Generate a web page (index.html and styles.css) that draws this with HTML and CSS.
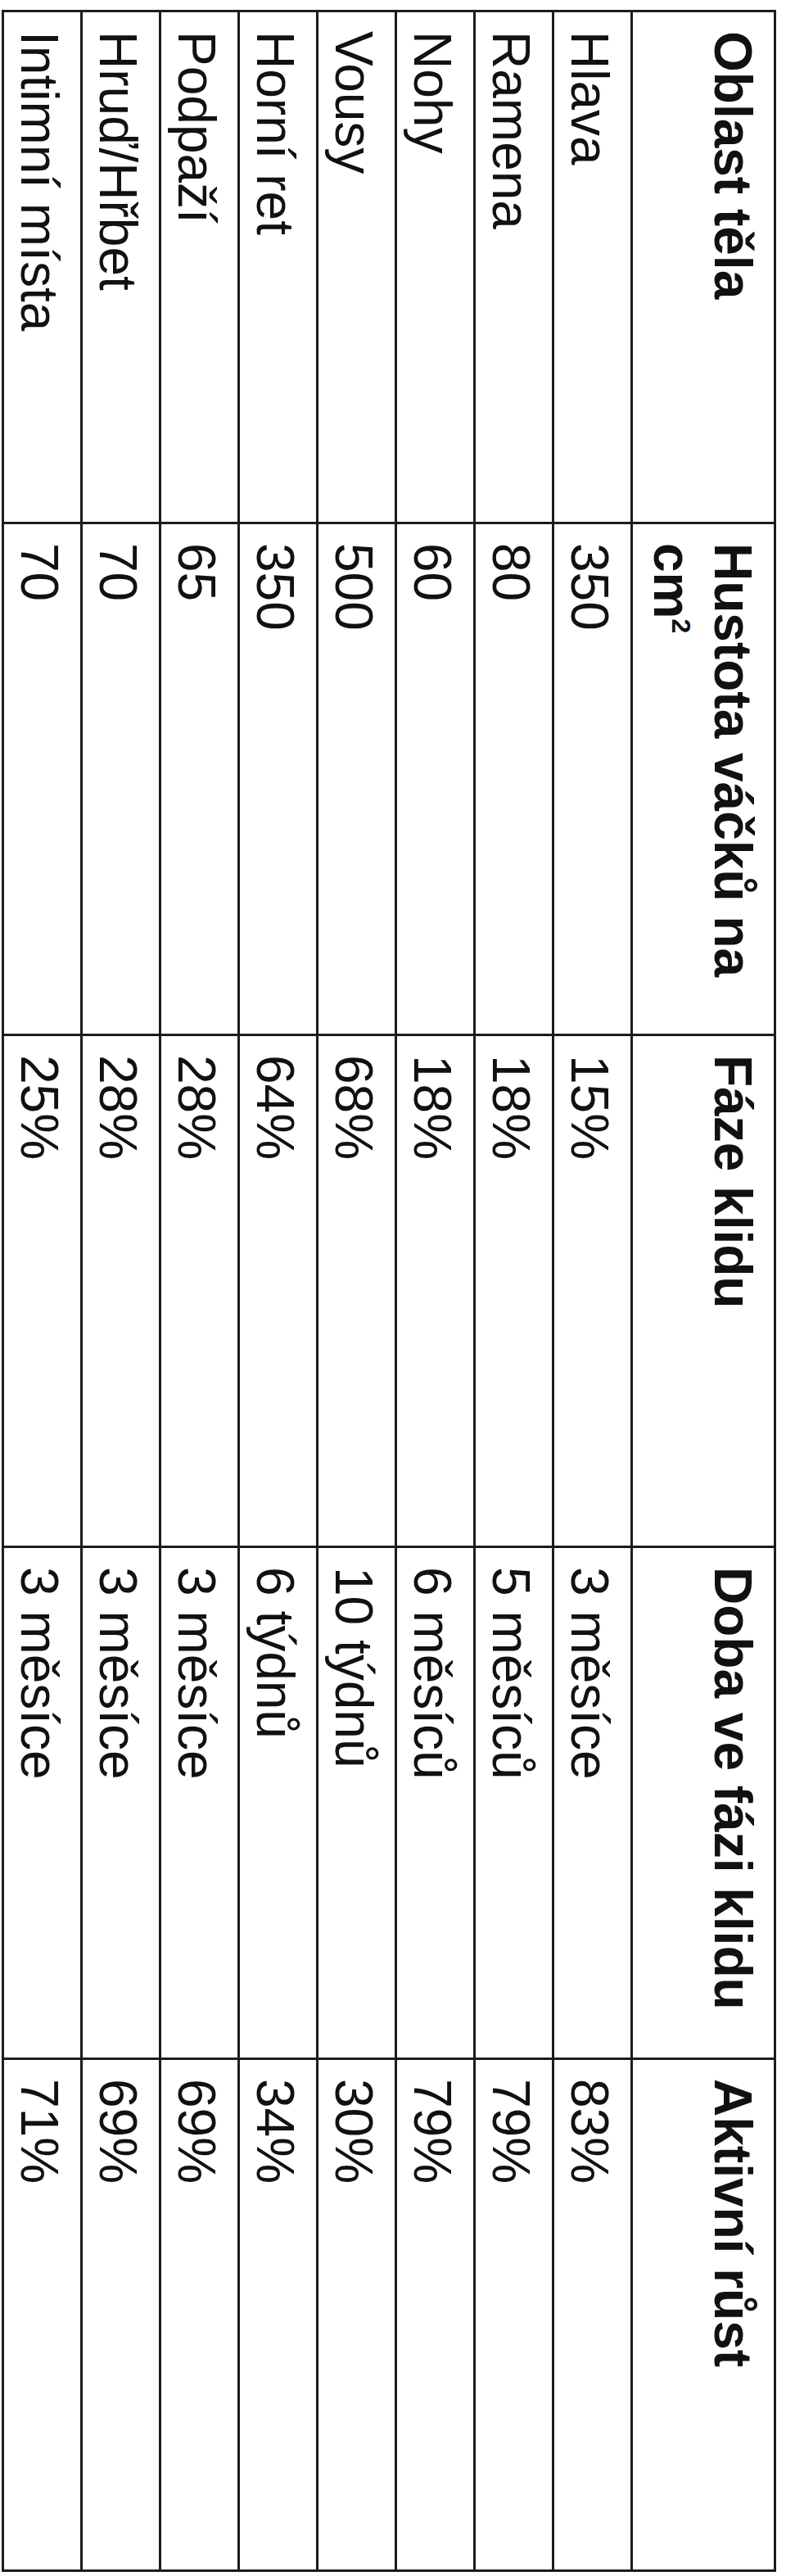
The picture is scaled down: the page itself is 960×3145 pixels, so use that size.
FILE: index.html
```html
<!DOCTYPE html>
<html lang="cs">
<head>
<meta charset="utf-8">
<title>Oblast těla</title>
<link rel="stylesheet" href="styles.css">
</head>
<body>
<div class="page">
  <table class="hair-table">
    <thead>
      <tr class="head-row">
        <th>Oblast těla</th>
        <th>Hustota váčků na cm<sup>2</sup></th>
        <th>Fáze klidu</th>
        <th>Doba ve fázi klidu</th>
        <th>Aktivní růst</th>
      </tr>
    </thead>
    <tbody>
      <tr><td>Hlava</td><td>350</td><td>15%</td><td>3 měsíce</td><td>83%</td></tr>
      <tr><td>Ramena</td><td>80</td><td>18%</td><td>5 měsíců</td><td>79%</td></tr>
      <tr><td>Nohy</td><td>60</td><td>18%</td><td>6 měsíců</td><td>79%</td></tr>
      <tr><td>Vousy</td><td>500</td><td>68%</td><td>10 týdnů</td><td>30%</td></tr>
      <tr><td>Horní ret</td><td>350</td><td>64%</td><td>6 týdnů</td><td>34%</td></tr>
      <tr><td>Podpaží</td><td>65</td><td>28%</td><td>3 měsíce</td><td>69%</td></tr>
      <tr><td>Hruď/Hřbet</td><td>70</td><td>28%</td><td>3 měsíce</td><td>69%</td></tr>
      <tr><td>Intimní místa</td><td>70</td><td>25%</td><td>3 měsíce</td><td>71%</td></tr>
    </tbody>
  </table>
</div>
</body>
</html>
```

FILE: styles.css
```css
html, body {
  margin: 0;
  padding: 0;
  background: #ffffff;
  overflow: hidden;
}

.page {
  padding: 12px 0 0 2px;
}

.hair-table {
  writing-mode: vertical-rl;
  text-orientation: sideways;
  border-collapse: separate;
  border-spacing: 3px;
  background: #1c1c1c;
  table-layout: fixed;
  inline-size: 3128px;
  block-size: 946px;
  font-family: "Liberation Sans", Arial, sans-serif;
  font-size: 64px;
  color: #111111;
}

.hair-table th,
.hair-table td {
  background: #ffffff;
  text-align: start;
  vertical-align: top;
  padding-block-start: 13px;
  padding-block-end: 0;
  padding-inline-start: 23px;
  padding-inline-end: 8px;
  line-height: normal;
}

.hair-table th {
  font-weight: 700;
}

.head-row {
  block-size: 172px;
}

.hair-table tbody tr {
  block-size: 93px;
}

.hair-table sup {
  font-size: 0.5em;
  line-height: 0;
}
```
